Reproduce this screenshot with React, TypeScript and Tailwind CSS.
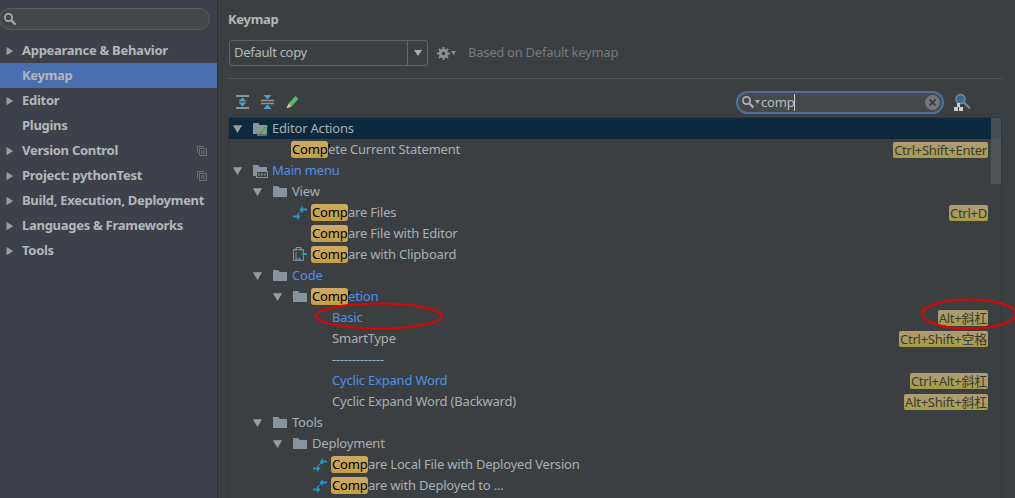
import type { ReactNode } from "react";

const font = "font-['Noto_Sans','Noto_Sans_CJK_SC',sans-serif]";

function Caret({ open, className = "" }: { open?: boolean; className?: string }) {
  return (
    <svg width="12" height="12" viewBox="0 0 12 12" className={className}>
      {open ? <path d="M1 2.5h10L6 11z" fill="#9a9da0" /> : <path d="M2 .5v11L11 6z" fill="#9a9da0" />}
    </svg>
  );
}

function CopyIcon() {
  return (
    <svg width="10" height="10" viewBox="0 0 10 10" fill="none" stroke="#6b6e72" className="ml-auto mr-[10px]">
      <path d="M.5 7V.5H7" />
      <path d="M2.5 2.5h7v7h-7zM4 5h4M4 7h4" />
    </svg>
  );
}

const sideItems: { label: string; caret?: boolean; selected?: boolean; copy?: boolean }[] = [
  { label: "Appearance & Behavior", caret: true },
  { label: "Keymap", selected: true },
  { label: "Editor", caret: true },
  { label: "Plugins" },
  { label: "Version Control", caret: true, copy: true },
  { label: "Project: pythonTest", caret: true, copy: true },
  { label: "Build, Execution, Deployment", caret: true },
  { label: "Languages & Frameworks", caret: true },
  { label: "Tools", caret: true },
];

function Sidebar() {
  return (
    <aside className="w-[218px] shrink-0 h-full bg-[#3e4149] border-r border-[#2f3133] pt-2">
      <div className="flex items-center h-[22px] w-[211px] -ml-px rounded-full border border-[#5b5e5d] bg-[#44474a] pl-[3px]">
        <svg width="14" height="14" viewBox="0 0 14 14" fill="none" stroke="#a9abad" strokeWidth="1.7">
          <circle cx="5.5" cy="5.5" r="3.6" />
          <path d="M8.5 8.5l4 4" strokeWidth="2.2" />
        </svg>
      </div>
      <div className="mt-[8px]">
        {sideItems.map((item) => (
          <div
            key={item.label}
            className={`flex items-center h-[25px] pl-[5px] ${item.selected ? "bg-[#4b6eaf]" : ""}`}
          >
            <span className="w-[17px] shrink-0 flex">{item.caret && <Caret className="w-[9px] h-[10px]" />}</span>
            <span className="text-[13px] tracking-[-0.28px] font-bold text-[#b4b7ba] whitespace-nowrap">{item.label}</span>
            {item.copy && <CopyIcon />}
          </div>
        ))}
      </div>
    </aside>
  );
}

function Folder({ kind }: { kind?: "edit" | "menu" }) {
  return (
    <svg width="15" height="14" viewBox="0 0 15 14">
      <path d="M0 1h5l2 2h7v9H0z" fill="#87939f" />
      {kind === "edit" && (
        <>
          <path d="M4 13h10" stroke="#a9b0b5" strokeWidth="1" />
          <path d="M4 10h2v2H4z" fill="#4eb04a" />
          <path d="M7 10h2v2H7z" fill="#c9544d" />
          <path d="M8 9l5-6 2 1.5-5 6.5z" fill="#4eb04a" />
        </>
      )}
      {kind === "menu" && (
        <>
          <rect x="3.5" y="7.5" width="11" height="6" fill="#3c3f41" stroke="#87939f" />
          <path d="M5 10.5h2" stroke="#56a54f" strokeWidth="2" />
          <path d="M8 10.5h2" stroke="#d8703b" strokeWidth="2" />
          <path d="M11 10.5h2" stroke="#3b8fd8" strokeWidth="2" />
        </>
      )}
    </svg>
  );
}

function CompareIcon() {
  return (
    <svg width="14" height="14" viewBox="0 0 14 14" fill="#1e97c9">
      <path d="M6.5 3.5L10 0v7zM10 2.5h4v2h-4z" />
      <path d="M7.5 10.5L4 7v7zM0 9.5h4v2H0z" />
      <path d="M5 8l3-3" stroke="#1e97c9" strokeWidth="1" />
    </svg>
  );
}

function ClipboardCompareIcon() {
  return (
    <svg width="16" height="17" viewBox="0 0 16 17" fill="none">
      <path d="M.5 3.5h10v11H.5z" stroke="#8d9092" />
      <path d="M3 5V1.5h5V5M3 6v8" stroke="#8d9092" />
      <path d="M7.5 7L10 4.5v5zM10 6h3v2h-3z" fill="#1e97c9" transform="translate(1 1)" />
      <path d="M8.5 13.5L6 11v5zM3 12.5h3v2H3z" fill="#1e97c9" />
    </svg>
  );
}

function Match({ text }: { text: string }) {
  return (
    <span className="inline-block w-[37px] -ml-px pl-px h-[17px] leading-[17px] bg-[linear-gradient(#cdab62,#c49f42)] rounded-[3px] text-black">
      {text}
    </span>
  );
}

const indent = ["pl-[3px]", "pl-[23px]", "pl-[43px]", "pl-[63px]"];

type RowProps = {
  depth: number;
  open?: boolean;
  icon?: ReactNode;
  match?: string;
  text: string;
  blue?: boolean;
  keys?: string;
  className?: string;
};

function Row({ depth, open, icon, match, text, blue, keys, className = "" }: RowProps) {
  return (
    <div className={`flex items-center h-[21px] whitespace-nowrap ${indent[depth]} ${className}`}>
      <span className="w-[21px] shrink-0 flex">{open && <Caret open className="w-[11px] h-[11px]" />}</span>
      <span className="w-[19px] shrink-0 flex">{icon}</span>
      <span className={`text-[13px] tracking-[-0.2px] leading-[17px] ${blue ? "text-[#4f8fea]" : "text-[#a9b0b5]"}`}>
        {match && <Match text={match} />}
        {text}
      </span>
      {keys && (
        <span className="ml-auto mr-[13px] px-px text-[13px] tracking-[-0.25px] leading-[16px] h-[16px] rounded-[2px] text-[#3a3c36] bg-[linear-gradient(#b09c76,#a59d48)]">
          {keys}
        </span>
      )}
    </div>
  );
}

function Tree() {
  return (
    <div className="relative mt-[3px] mr-[13px] h-[400px] bg-[#3c3f41] border-t border-l border-r border-[#333537] overflow-hidden">
      <Row depth={0} open icon={<Folder kind="edit" />} text="Editor Actions" className="bg-[#0d293e]" />
      <Row depth={1} match="Compl" text="ete Current Statement" keys="Ctrl+Shift+Enter" />
      <Row depth={0} open icon={<Folder kind="menu" />} text="Main menu" blue />
      <Row depth={1} open icon={<Folder />} text="View" />
      <Row depth={2} icon={<CompareIcon />} match="Comp" text="are Files" keys="Ctrl+D" />
      <Row depth={2} match="Comp" text="are File with Editor" />
      <Row depth={2} icon={<ClipboardCompareIcon />} match="Comp" text="are with Clipboard" />
      <Row depth={1} open icon={<Folder />} text="Code" blue />
      <Row depth={2} open icon={<Folder />} match="Compl" text="etion" blue />
      <Row depth={3} text="Basic" blue keys="Alt+斜杠" />
      <Row depth={3} text="SmartType" keys="Ctrl+Shift+空格" />
      <Row depth={3} text="-------------" />
      <Row depth={3} text="Cyclic Expand Word" blue keys="Ctrl+Alt+斜杠" />
      <Row depth={3} text="Cyclic Expand Word (Backward)" keys="Alt+Shift+斜杠" />
      <Row depth={1} open icon={<Folder />} text="Tools" />
      <Row depth={2} open icon={<Folder />} text="Deployment" />
      <Row depth={3} icon={<CompareIcon />} match="Comp" text="are Local File with Deployed Version" />
      <Row depth={3} icon={<CompareIcon />} match="Comp" text="are with Deployed to ..." />
      <div className="absolute right-0 top-0 w-[10px] h-[66px] bg-[#55595c]/80" />
    </div>
  );
}

function Toolbar() {
  return (
    <div className="flex items-center h-[24px] mt-[11px] mr-[13px]">
      <div className="flex gap-[12px] pl-[8px] w-[508px]">
        <svg width="13" height="14" viewBox="0 0 13 14">
          <path d="M0 1h13M0 13h13" stroke="#8f9294" strokeWidth="2" />
          <path d="M6.5 2.5L10.5 6.5h-8zM6.5 11.5L2.500 7.500h8z" fill="#4f9fd0" />
        </svg>
        <svg width="13" height="14" viewBox="0 0 13 14">
          <path d="M0 5.5h13M0 8.5h13" stroke="#8f9294" strokeWidth="1.5" />
          <path d="M6.5 4.5L2.500 0h8zM6.500 9.500L10.500 14h-8z" fill="#4f9fd0" />
        </svg>
        <svg width="13" height="14" viewBox="0 0 13 14">
          <path d="M2.500 8.500L9.500 1l3 3-7 7.500z" fill="#5cb85c" />
          <path d="M2.500 8.500l-2 5 5-2z" fill="#d8c9a3" />
        </svg>
      </div>
      <div className="flex items-center w-[208px] h-[23px] rounded-full bg-[#45494c] border-2 border-[#4a729c] pl-[3px] pr-[2px]">
        <svg width="14" height="14" viewBox="0 0 14 14" fill="none" stroke="#b0b2b4" strokeWidth="1.7">
          <circle cx="5.500" cy="5.500" r="3.600" />
          <path d="M8.500 8.500l4 4" strokeWidth="2.200" />
        </svg>
        <svg width="5" height="4" viewBox="0 0 5 4" className="mr-px">
          <path d="M0 0h5L2.500 4z" fill="#b0b2b4" />
        </svg>
        <span className="text-[13px] tracking-[-0.2px] text-[#b8bcbf] border-r border-[#d0d0d0] leading-[17px] h-[17px]">comp</span>
        <svg width="15" height="15" viewBox="0 0 15 15" className="ml-auto">
          <circle cx="7.500" cy="7.500" r="7.500" fill="#74777a" />
          <path d="M4.500 4.500l6 6M10.500 4.500l-6 6" stroke="#3c3f41" strokeWidth="1.800" />
        </svg>
      </div>
      <svg width="17" height="18" viewBox="0 0 17 18" fill="none" className="ml-[10px]">
        <circle cx="6.500" cy="6" r="4.500" stroke="#84878a" strokeWidth="1.500" fill="#2c6f96" />
        <path d="M10 9.500l6 6" stroke="#84878a" strokeWidth="2.200" />
        <rect x="0" y="14" width="4" height="4" fill="#c9cbcd" />
        <rect x="5" y="14" width="4" height="4" fill="#c9cbcd" />
        <rect x="3" y="10" width="3" height="4" fill="#c9cbcd" />
      </svg>
    </div>
  );
}

function Main() {
  return (
    <main className="relative flex-1 h-full pl-[10px] pt-[11px] bg-[#3c3f41]">
      <h1 className="text-[13px] tracking-[-0.28px] leading-[17px] font-bold text-[#b4b7ba]">Keymap</h1>
      <div className="flex items-center mt-[12px] h-[26px]">
        <div className="flex w-[199px] ml-[1px] h-[26px] rounded-[3px] border border-[#646464] bg-[#3c3f41]">
          <span className="flex-1 pl-[4px] text-[13px] tracking-[-0.3px] leading-[23px] text-[#b4b7ba]">Default copy</span>
          <span className="w-[20px] flex items-center justify-center border-l border-[#646464]">
            <svg width="8" height="6" viewBox="0 0 8 6">
              <path d="M0 0h8L4 6z" fill="#a9abad" />
            </svg>
          </span>
        </div>
        <svg width="13" height="13" viewBox="0 0 14 14" className="ml-[9px]">
          <circle cx="7" cy="7" r="3.500" fill="none" stroke="#8d9092" strokeWidth="3" />
          <path d="M7 0v14M0 7h14M2 2l10 10M12 2L2 12" stroke="#8d9092" strokeWidth="2" strokeDasharray="3 8" />
        </svg>
        <svg width="5" height="4" viewBox="0 0 5 4" className="ml-[1px]">
          <path d="M0 0h5L2.500 4z" fill="#8d9092" />
        </svg>
        <span className="ml-[12px] text-[13px] tracking-[-0.26px] text-[#787a7c]">Based on Default keymap</span>
      </div>
      <div className="mt-[12px] h-px mr-[13px] bg-[#515355]" />
      <Toolbar />
      <Tree />
      <svg className="absolute left-0 top-0 pointer-events-none" width="797" height="498" fill="none" stroke="#e60000" strokeWidth="2">
        <ellipse cx="161" cy="316" rx="63" ry="12.500" />
        <ellipse cx="751" cy="314" rx="47" ry="14.500" />
      </svg>
    </main>
  );
}

export default function App() {
  return (
    <div className={`flex w-[1015px] h-[498px] overflow-hidden ${font}`}>
      <Sidebar />
      <Main />
    </div>
  );
}
